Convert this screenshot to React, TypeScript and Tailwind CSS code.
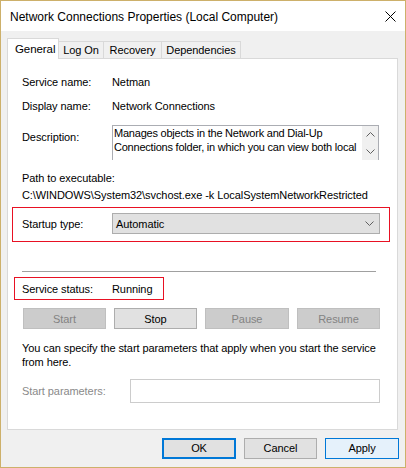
import React from 'react';

const font = { fontFamily: '"Liberation Sans", Arial, sans-serif' };

const Chevron = ({ up = false }: { up?: boolean }) => (
  <svg width="9" height="5" viewBox="0 0 9 5" className="block">
    <polyline
      points={up ? '0.5,4.5 4.5,0.5 8.5,4.5' : '0.5,0.5 4.5,4.5 8.5,0.5'}
      fill="none"
      stroke="#606060"
      strokeWidth="1"
    />
  </svg>
);

const Btn = ({ label, disabled = false }: { label: string; disabled?: boolean }) => (
  <div
    className={
      disabled
        ? 'w-[83px] h-[21px] flex items-center justify-center border border-[#bfbfbf] bg-[#cccccc] text-[#838383]'
        : 'w-[83px] h-[21px] flex items-center justify-center border border-[#adadad] bg-[#e1e1e1] text-black'
    }
  >
    {label}
  </div>
);

const tabs = ['Log On', 'Recovery', 'Dependencies'];

export default function App() {
  return (
    <div
      style={font}
      className="w-[406px] h-[468px] border border-[#cdb06a] bg-[#f0f0f0] flex flex-col text-[11px] tracking-[-0.08px] text-black overflow-hidden"
    >
      {/* title bar */}
      <div className="h-[30px] bg-white flex items-center justify-between pl-[9px] pr-[9px] shrink-0 tracking-normal">
        <span className="text-[12px] leading-none pt-[2px]">Network Connections Properties (Local Computer)</span>
        <svg width="11" height="11" viewBox="0 0 11 11" className="mt-[1px]">
          <path d="M0.5 0.5 L10.5 10.5 M10.5 0.5 L0.5 10.5" stroke="#000" strokeWidth="1" />
        </svg>
      </div>

      {/* tabs */}
      <div className="flex items-end pl-[6px] mt-[7px] h-[20px] shrink-0">
        <div className="relative z-10 w-[52px] h-[21px] -mb-px bg-white border border-b-0 border-[#d9d9d9] pl-[7px] pt-[3px] leading-[14px] text-[11.5px]">
          General
        </div>
        {tabs.map((t) => (
          <div
            key={t}
            className={
              'h-[17px] border border-l-0 border-b-0 border-[#d9d9d9] bg-[#f0f0f0] flex items-center justify-center ' +
              (t === 'Log On' ? 'w-[45px]' : t === 'Recovery' ? 'w-[58px]' : 'w-[79px]')
            }
          >
            {t}
          </div>
        ))}
      </div>

      {/* panel */}
      <div className="ml-[6px] w-[391px] h-[372px] border border-[#d9d9d9] bg-white flex flex-col shrink-0 leading-[16px]">
        <div className="flex mt-[15px] pl-[14px]">
          <span className="w-[90px]">Service name:</span>
          <span>Netman</span>
        </div>
        <div className="flex mt-[8px] pl-[14px]">
          <span className="w-[90px]">Display name:</span>
          <span>Network Connections</span>
        </div>
        <div className="flex mt-[11px] pl-[14px]">
          <span className="w-[90px] pt-[4px]">Description:</span>
          <div className="w-[267px] h-[35px] border border-[#abadb3] border-b-0 flex">
            <div className="flex-1 pl-[1px] leading-[14px] whitespace-nowrap overflow-hidden tracking-[-0.22px]">
              Manages objects in the Network and Dial-Up
              <br />
              Connections folder, in which you can view both local
            </div>
            <div className="w-[16px] shrink-0 bg-[#f0f0f0] flex flex-col items-center justify-between py-[6px]">
              <Chevron up />
              <Chevron />
            </div>
          </div>
        </div>
        <div className="mt-[10px] pl-[14px]">Path to executable:</div>
        <div className="mt-px pl-[14px] whitespace-nowrap">
          C:\WINDOWS\System32\svchost.exe -k LocalSystemNetworkRestricted
        </div>

        <div className="ml-[4px] mt-[4px] w-[378px] h-[35px] border border-[#e81123] flex items-start pt-[5px] pl-[9px]">
          <span className="w-[90px] pt-[3px]">Startup type:</span>
          <div className="w-[268px] h-[21px] border border-[#adadad] bg-[#e1e1e1] flex items-center justify-between pl-[3px] pr-[5px]">
            <span>Automatic</span>
            <Chevron />
          </div>
        </div>

        <div className="ml-[14px] mt-[29px] w-[354px] h-px bg-[#a0a0a0]" />

        <div className="ml-[6px] mt-[5px] w-[150px] h-[23px] border border-[#e81123] flex items-center pl-[7px]">
          <span className="w-[90px]">Service status:</span>
          <span>Running</span>
        </div>

        <div className="flex ml-[15px] mt-[8px] gap-[8px]">
          <Btn label="Start" disabled />
          <Btn label="Stop" />
          <div className="w-[84px] h-[21px] flex items-center justify-center border border-[#bfbfbf] bg-[#cccccc] text-[#838383]">
            Pause
          </div>
          <Btn label="Resume" disabled />
        </div>

        <div className="mt-[12px] pl-[14px] leading-[14px]">
          You can specify the start parameters that apply when you start the service
          <br />
          from here.
        </div>

        <div className="flex items-center mt-[10px] pl-[14px]">
          <span className="w-[108px] text-[#8a8a8a]">Start parameters:</span>
          <div className="w-[250px] h-[24px] border border-[#cccccc] bg-white" />
        </div>
      </div>

      {/* bottom buttons */}
      <div className="flex justify-end gap-[8px] pr-[6px] mt-[8px]">
        <div className="w-[74px] h-[21px] border-2 border-[#0078d7] bg-[#e1e1e1] flex items-center justify-center">OK</div>
        <div className="w-[73px] h-[21px] border border-[#adadad] bg-[#e1e1e1] flex items-center justify-center">Cancel</div>
        <div className="w-[74px] h-[21px] border border-[#0078d7] bg-[#e5f1fb] flex items-center justify-center">Apply</div>
      </div>
    </div>
  );
}
